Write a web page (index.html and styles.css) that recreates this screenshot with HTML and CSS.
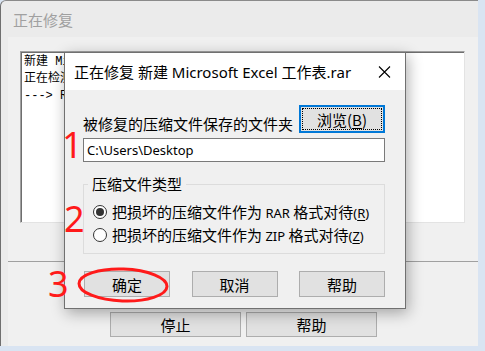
FILE: index.html
```html
<!DOCTYPE html>
<html lang="zh-CN">
<head>
<meta charset="utf-8">
<title>正在修复</title>
<link rel="stylesheet" href="styles.css">
</head>
<body>
<div class="screen">
  <div class="win">
    <div class="win-title">正在修复</div>
    <div class="win-client">
      <div class="log">新建 Microsoft Excel 工作表.rar
正在检测压缩文件格式
---> RAR 格式</div>
      <div class="sep"></div>
      <div class="win-buttons">
        <button class="btn wide">停止</button>
        <button class="btn wide">帮助</button>
      </div>
    </div>
  </div>

  <div class="dialog">
    <div class="dlg-title">
      <span class="dlg-caption">正在修复 新建 Microsoft Excel 工作表.rar</span>
      <svg class="close" width="13" height="12" viewBox="0 0 13 12"><path d="M1 0.5 L12 11.5 M12 0.5 L1 11.5" stroke="#000" stroke-width="1.1" fill="none"/></svg>
    </div>
    <div class="dlg-body">
      <div class="row-folder">
        <span class="label">被修复的压缩文件保存的文件夹</span>
        <button class="btn browse">浏览(<u>B</u>)</button>
      </div>
      <div class="path">C:\Users\Desktop</div>
      <fieldset class="group">
        <legend>压缩文件类型</legend>
        <div class="radio-row"><span class="radio checked"></span><span class="rtext">把损坏的压缩文件作为 <span class="lat">RAR</span> 格式对待<span class="lat">(<u>R</u>)</span></span></div>
        <div class="radio-row"><span class="radio"></span><span class="rtext">把损坏的压缩文件作为 <span class="lat">ZIP</span> 格式对待<span class="lat">(<u>Z</u>)</span></span></div>
      </fieldset>
      <div class="dlg-buttons">
        <button class="btn small">确定</button>
        <button class="btn small">取消</button>
        <button class="btn small">帮助</button>
      </div>
    </div>
  </div>

  <span class="mark m1">1</span>
  <span class="mark m2">2</span>
  <span class="mark m3">3</span>
  <svg class="ring" width="100" height="44" viewBox="0 0 100 44"><ellipse cx="50" cy="22" rx="44" ry="16" fill="none" stroke="#ff1a1a" stroke-width="3" transform="rotate(2 50 22)"/></svg>
</div>
</body>
</html>
```

FILE: styles.css
```css
html, body {
  margin: 0;
  padding: 0;
}
body {
  width: 485px;
  height: 351px;
  overflow: hidden;
  font-family: "Noto Sans", "Noto Sans CJK SC", sans-serif;
}
.screen {
  position: relative;
  width: 485px;
  height: 351px;
  background: #d9e4f2;
}
.win {
  width: 478px;
  height: 346px;
  box-sizing: border-box;
  border-top: 1px solid #8a8a8a;
  border-left: 1px solid #6f6f6f;
  border-top-left-radius: 6px;
  background: #ebebeb;
  padding-left: 7px;
  display: flex;
  flex-direction: column;
}
.win-title {
  height: 36px;
  display: flex;
  align-items: center;
  padding-left: 5px;
  font-family: "Noto Sans CJK SC", sans-serif;
  font-size: 15px;
  color: #a0a0a0;
}
.win-client {
  flex: 1;
  background: #f0f0f0;
  display: flex;
  flex-direction: column;
}
.log {
  margin: 14px 13px 0 12px;
  height: 172px;
  box-sizing: border-box;
  background: #fff;
  border: 1px solid;
  border-color: #a0a0a0 #e3e3e3 #e3e3e3 #a0a0a0;
  box-shadow: inset 1px 1px 0 #6e6e6e;
  padding: 2px 3px;
  font-family: "Liberation Mono", "Noto Sans CJK SC", monospace;
  font-size: 12px;
  line-height: 17px;
  white-space: pre;
  overflow: hidden;
  color: #000;
}
.sep {
  margin-top: 38px;
  border-top: 1px solid #a0a0a0;
}
.win-buttons {
  margin-top: 50px;
  display: flex;
  justify-content: center;
  gap: 5px;
  padding-left: 1px;
}
.btn {
  box-sizing: border-box;
  border: 1px solid #adadad;
  background: #e1e1e1;
  font-family: "Noto Sans CJK SC", sans-serif;
  font-size: 15px;
  color: #000;
  padding: 0;
  margin: 0;
  line-height: 1;
}
.btn.wide {
  width: 131px;
  height: 25px;
}
.dialog {
  position: absolute;
  left: 64px;
  top: 52px;
  width: 342px;
  height: 257px;
  box-sizing: border-box;
  border: 1px solid #707070;
  background: #f0f0f0;
  box-shadow: 2px 4px 14px rgba(0, 0, 0, 0.32);
  display: flex;
  flex-direction: column;
}
.dlg-title {
  height: 37px;
  background: #fff;
  display: flex;
  align-items: center;
  justify-content: space-between;
  padding: 0 14px 0 9px;
}
.dlg-caption {
  font-family: "Noto Sans", "Noto Sans CJK SC", sans-serif;
  font-size: 15px;
  color: #000;
}
.dlg-body {
  padding: 15px 20px 0 18px;
  display: flex;
  flex-direction: column;
}
.row-folder {
  height: 28px;
  display: flex;
  justify-content: space-between;
  align-items: flex-end;
}
.label {
  font-family: "Noto Sans CJK SC", sans-serif;
  font-size: 15px;
  line-height: 18px;
  color: #000;
}
.btn.browse {
  width: 86px;
  height: 28px;
  border: 2px solid #0078d7;
  outline: 1px dotted #000;
  outline-offset: -4px;
}
.btn u, .lat u {
  text-decoration-thickness: 1px;
  text-underline-offset: 2px;
}
.path {
  margin-top: 5px;
  height: 24px;
  box-sizing: border-box;
  border: 1px solid #7a7a7a;
  background: #fff;
  padding-left: 3px;
  display: flex;
  align-items: center;
  font-family: "Noto Sans", sans-serif;
  font-size: 13px;
  color: #000;
}
.group {
  margin: 12px 0 0 0;
  padding: 6px 0 7px 9px;
  border: 1px solid #dcdcdc;
  min-width: 0;
}
.group legend {
  margin-left: -5px;
  padding: 0 4px;
  font-family: "Noto Sans CJK SC", sans-serif;
  font-size: 15px;
  line-height: 20px;
  color: #000;
}
.radio-row {
  height: 23px;
  display: flex;
  align-items: center;
  gap: 5px;
}
.radio {
  width: 14px;
  height: 14px;
  box-sizing: border-box;
  border: 1px solid #333;
  border-radius: 50%;
  background: #fff;
  display: flex;
  align-items: center;
  justify-content: center;
}
.radio.checked::after {
  content: "";
  width: 8px;
  height: 8px;
  border-radius: 50%;
  background: #333;
}
.rtext {
  font-family: "Noto Sans CJK SC", sans-serif;
  font-size: 15px;
  color: #000;
}
.lat {
  font-family: "Noto Sans", sans-serif;
  font-size: 13px;
}
.dlg-buttons {
  margin-top: 17px;
  padding-left: 1px;
  display: flex;
  justify-content: space-between;
}
.btn.small {
  width: 86px;
  height: 26px;
}
.mark {
  position: absolute;
  font-family: "Noto Sans", sans-serif;
  font-weight: 400;
  font-size: 36px;
  line-height: 1;
  color: #ff1a1a;
}
.m1 { left: 62px; top: 127px; }
.m2 { left: 64px; top: 201px; }
.m3 { left: 48px; top: 266px; }
.ring {
  position: absolute;
  left: 73px;
  top: 263px;
}
```
